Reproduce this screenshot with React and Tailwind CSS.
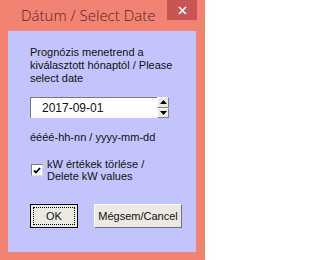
import React from "react";

const body = { fontFamily: '"Liberation Sans", Arial, sans-serif' };

const Arrow = ({ up }) => (
  <svg width="7" height="4" viewBox="0 0 7 4">
    <path d={up ? "M3.5 0 L7 4 L0 4 Z" : "M0 0 L7 0 L3.5 4 Z"} fill="#000" />
  </svg>
);

export default function App() {
  return (
    <div className="w-[205px] h-[260px] bg-[#f28272] flex flex-col" style={body}>
      {/* title bar */}
      <div className="h-[31px] flex items-start shrink-0">
        <div
          className="pl-[21px] pt-[5px] text-[15px] leading-[20px] text-[#5a2222] font-light"
          style={{ fontFamily: '"Open Sans", "Noto Sans", sans-serif' }}
        >
          Dátum / Select Date
        </div>
        <div className="ml-auto mr-[8px] w-[30px] h-[20px] bg-[#c85454] flex items-center justify-center">
          <svg width="9" height="9" viewBox="0 0 9 9">
            <path d="M1 1 L8 8 M8 1 L1 8" stroke="#fff" strokeWidth="1.6" />
          </svg>
        </div>
      </div>

      {/* client area */}
      <div className="flex-1 ml-[8px] mr-[9px] mb-[8px] bg-[#c4c4fd] pl-[22px] pt-[15px] text-[11px] leading-[13px] text-[#111]">
        <div>
          Prognózis menetrend a<br />
          kiválasztott hónaptól / Please<br />
          select date
        </div>

        <div className="mt-[12px] flex h-[21px]">
          <div className="w-[127px] bg-white border-t border-l border-[#7a7a7a] border-b-white border-r-white flex items-center pl-[11px] text-[12px]">
            2017-09-01
          </div>
          <div className="w-[12px] flex flex-col">
            <div className="flex-1 bg-[#ece9e0] border border-t-white border-l-white border-b-[#808080] border-r-[#808080] flex items-center justify-center">
              <Arrow up />
            </div>
            <div className="flex-1 bg-[#ece9e0] border border-t-white border-l-white border-b-[#808080] border-r-[#808080] flex items-center justify-center">
              <Arrow />
            </div>
          </div>
        </div>

        <div className="mt-[13px]">éééé-hh-nn / yyyy-mm-dd</div>

        <div className="mt-[14px] flex items-start">
          <div className="mt-[6px] ml-[1px] w-[12px] h-[12px] bg-white border border-t-[#808080] border-l-[#808080] border-b-[#dcdcdc] border-r-[#dcdcdc] flex items-center justify-center">
            <svg width="8" height="7" viewBox="0 0 8 7">
              <path d="M1 3.5 L3 5.5 L7 1" stroke="#000" strokeWidth="1.8" fill="none" />
            </svg>
          </div>
          <div className="ml-[4px] leading-[12px]">
            kW értékek törlése /<br />
            Delete kW values
          </div>
        </div>

        <div className="mt-[22px] flex gap-[16px]">
          <button className="w-[48px] h-[24px] bg-[#ece9e3] border border-black p-[2px] text-[11px]">
            <div className="w-full h-full border border-dotted border-black flex items-center justify-center">
              OK
            </div>
          </button>
          <button className="w-[88px] h-[24px] bg-[#ece9e3] border border-t-white border-l-white border-b-[#707070] border-r-[#707070] text-[11px] flex items-center justify-center">
            Mégsem/Cancel
          </button>
        </div>
      </div>
    </div>
  );
}
